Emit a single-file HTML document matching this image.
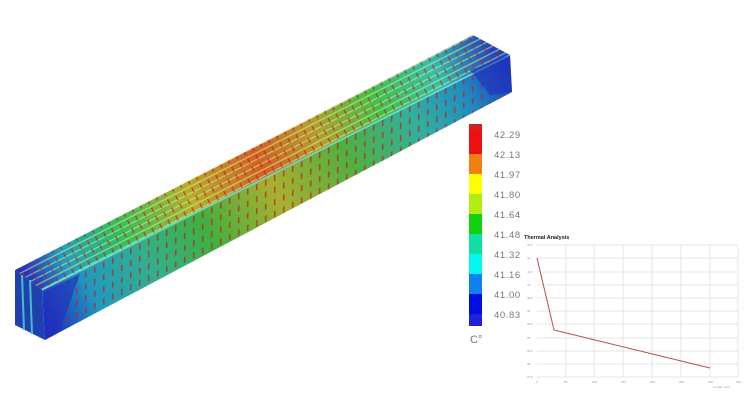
<!DOCTYPE html>
<html><head><meta charset="utf-8"><style>
html,body{margin:0;padding:0;background:#fff;width:750px;height:400px;overflow:hidden}
svg{position:absolute;left:0;top:0}
text{font-family:"Liberation Sans",sans-serif}
</style></head><body>
<svg width="750" height="400" viewBox="0 0 750 400">
<defs>
<linearGradient id="gt" gradientUnits="userSpaceOnUse" x1="28" y1="280" x2="492" y2="45">
<stop offset="0" stop-color="#2030c0"/><stop offset="0.08" stop-color="#20a0c0"/>
<stop offset="0.2" stop-color="#30c060"/><stop offset="0.35" stop-color="#b0b030"/>
<stop offset="0.5" stop-color="#d06028"/><stop offset="0.62" stop-color="#b0a030"/>
<stop offset="0.75" stop-color="#40c050"/><stop offset="0.88" stop-color="#30c0b0"/>
<stop offset="1" stop-color="#2040c0"/></linearGradient>
<linearGradient id="gf" gradientUnits="userSpaceOnUse" x1="44" y1="315" x2="510" y2="73">
<stop offset="0" stop-color="#1a30c0"/><stop offset="0.1" stop-color="#2098c0"/>
<stop offset="0.22" stop-color="#30b090"/><stop offset="0.35" stop-color="#40b040"/>
<stop offset="0.5" stop-color="#a8b030"/><stop offset="0.65" stop-color="#50b040"/>
<stop offset="0.8" stop-color="#30b0a0"/><stop offset="0.9" stop-color="#2090c0"/>
<stop offset="1" stop-color="#1a40c0"/></linearGradient>
<pattern id="arr" width="9" height="9" patternUnits="userSpaceOnUse" patternTransform="rotate(-27)">
<rect x="4" y="2" width="1.4" height="5" fill="#c02020"/></pattern>
<pattern id="arrv" width="9" height="12" patternUnits="userSpaceOnUse" patternTransform="skewY(-27)">
<rect x="4" y="3" width="1.5" height="6" fill="#c02020"/></pattern>
<pattern id="str" width="6" height="6" patternUnits="userSpaceOnUse" patternTransform="rotate(-27)">
<rect x="0" y="0" width="6" height="1.2" fill="#e8f080" opacity="0.6"/></pattern>
</defs>
<polygon points="15,270 473,35 510,55 42,290" fill="url(#gt)"/>
<polygon points="15,270 473,35 510,55 42,290" fill="url(#str)"/>
<polygon points="15,270 473,35 510,55 42,290" fill="url(#arr)" opacity="0.7"/>
<polygon points="42,290 510,55 512,92 45,340" fill="url(#gf)"/>
<polygon points="42,290 510,55 512,92 45,340" fill="url(#arrv)" opacity="0.8"/>
<line x1="42" y1="290" x2="510" y2="55" stroke="#60e0e0" stroke-width="1.5"/>
<polygon points="15,270 42,290 45,340 15,325" fill="#2040b0"/>
<line x1="22" y1="275" x2="24" y2="330" stroke="#40c0c0" stroke-width="2"/>
<line x1="30" y1="280" x2="32" y2="334" stroke="#40c0c0" stroke-width="2"/>
<polygon points="44,292 80,274 60,330 45,338" fill="#1a30c0" opacity="0.6"/>
<polygon points="470,70 510,55 512,92 490,95" fill="#1a30c0" opacity="0.6"/>
<rect x="469" y="124" width="13" height="6" fill="#d02020"/>
<rect x="469" y="130" width="13" height="24" fill="#ee1010"/>
<rect x="469" y="154" width="13" height="20" fill="#f08010"/>
<rect x="469" y="174" width="13" height="20" fill="#ffff00"/>
<rect x="469" y="194" width="13" height="20" fill="#b0ee10"/>
<rect x="469" y="214" width="13" height="20" fill="#10d010"/>
<rect x="469" y="234" width="13" height="20" fill="#10e0a0"/>
<rect x="469" y="254" width="13" height="20" fill="#00f8f0"/>
<rect x="469" y="274" width="13" height="20" fill="#1080f0"/>
<rect x="469" y="294" width="13" height="20" fill="#0010e0"/>
<rect x="469" y="314" width="13" height="12" fill="#2020d8"/>
<g font-size="9.5" fill="#777" letter-spacing="0.6">
<text x="494" y="138">42.29</text><text x="494" y="158">42.13</text><text x="494" y="178">41.97</text>
<text x="494" y="198">41.80</text><text x="494" y="218">41.64</text><text x="494" y="238">41.48</text>
<text x="494" y="258">41.32</text><text x="494" y="278">41.16</text><text x="494" y="298">41.00</text>
<text x="494" y="318">40.83</text><text x="470" y="343" font-size="11" letter-spacing="0">C°</text></g>
<text x="524" y="239" font-size="5.5" font-weight="bold" fill="#222">Thermal Analysis</text>
<g stroke="#ddd" stroke-width="0.8">
<line x1="537" y1="245" x2="738" y2="245"/><line x1="537" y1="258" x2="738" y2="258"/><line x1="537" y1="272" x2="738" y2="272"/><line x1="537" y1="285" x2="738" y2="285"/><line x1="537" y1="298" x2="738" y2="298"/><line x1="537" y1="311" x2="738" y2="311"/><line x1="537" y1="324" x2="738" y2="324"/><line x1="537" y1="338" x2="738" y2="338"/><line x1="537" y1="351" x2="738" y2="351"/><line x1="537" y1="364" x2="738" y2="364"/><line x1="537" y1="377" x2="738" y2="377"/>
<line x1="566" y1="245" x2="566" y2="377"/><line x1="594" y1="245" x2="594" y2="377"/><line x1="623" y1="245" x2="623" y2="377"/><line x1="652" y1="245" x2="652" y2="377"/><line x1="681" y1="245" x2="681" y2="377"/><line x1="710" y1="245" x2="710" y2="377"/><line x1="738" y1="245" x2="738" y2="377"/>
</g>
<g font-size="3" fill="#999">
<text x="527" y="246">42.5</text><text x="527" y="259">42</text><text x="527" y="273">41.5</text><text x="527" y="286">41</text><text x="527" y="299">40.5</text><text x="527" y="312">40</text><text x="527" y="325">39.5</text><text x="527" y="339">39</text><text x="527" y="352">38.5</text><text x="527" y="365">38</text><text x="527" y="378">37.5</text>
<text x="536" y="383">0</text><text x="564" y="383">50</text><text x="592" y="383">100</text><text x="621" y="383">150</text><text x="650" y="383">200</text><text x="679" y="383">250</text><text x="708" y="383">300</text><text x="736" y="383">350</text>
<text x="713" y="388">Length (mm)</text></g>
<polyline points="537,258 554,330 710,368" fill="none" stroke="#b05050" stroke-width="1"/>
</svg>
</body></html>
